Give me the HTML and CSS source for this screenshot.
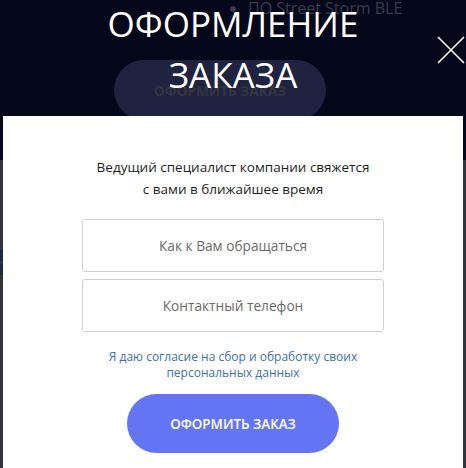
FILE: index.html
```html
<!DOCTYPE html>
<html lang="ru">
<head>
<meta charset="utf-8">
<title>Оформление заказа</title>
<link rel="stylesheet" href="styles.css">
</head>
<body>
<div class="page">
  <div class="hero">
    <ul class="features">
      <li>ПО Street Storm BLE</li>
    </ul>
    <div class="ghost-btn">ОФОРМИТЬ ЗАКАЗ</div>
  </div>
  <div class="section">
    <div class="stripe"></div>
    <div class="stripe"></div>
  </div>
</div>

<div class="overlay">
  <h1 class="title">ОФОРМЛЕНИЕ<br>ЗАКАЗА</h1>
  <button class="close" aria-label="Закрыть">
    <svg width="28" height="28" viewBox="0 0 28 28"><path d="M1 1 L27 27 M27 1 L1 27" stroke="#fff" stroke-width="1.6" fill="none"/></svg>
  </button>
  <div class="modal">
    <p class="lead">Ведущий специалист компании свяжется<br>с вами в ближайшее время</p>
    <form class="form">
      <input class="field" type="text" placeholder="Как к Вам обращаться">
      <input class="field" type="tel" placeholder="Контактный телефон">
      <a class="consent" href="#">Я даю согласие на сбор и обработку своих<br>персональных данных</a>
      <button class="submit" type="button">ОФОРМИТЬ ЗАКАЗ</button>
    </form>
  </div>
</div>
</body>
</html>
```
FILE: styles.css
```css
* { box-sizing: border-box; }
html, body { margin: 0; padding: 0; }
body {
  width: 466px;
  height: 468px;
  overflow: hidden;
  position: relative;
  background: #05081a;
  font-family: "Open Sans", "Noto Sans", sans-serif;
}

.page { display: flex; flex-direction: column; height: 468px; }
.hero { height: 160px; background: #05081a; display: flex; flex-direction: column; align-items: flex-start; }
.features {
  margin: -2px 0 0;
  padding: 0 0 0 248px;
  color: #383b4c;
  font-size: 16px;
  line-height: 20px;
}
.features li { list-style: disc; }
.ghost-btn {
  margin: 42px 0 0 114px;
  width: 212px;
  height: 60px;
  border-radius: 30px;
  background: #1f2340;
  color: #34363f;
  font-weight: 700;
  font-size: 13.7px;
  display: flex;
  align-items: center;
  justify-content: center;
}
.section { flex: 1; background: #32333b; padding-top: 90px; display: flex; flex-direction: column; gap: 3px; }
.stripe { width: 3px; height: 11px; background: #1b2a48; }

.overlay {
  position: absolute;
  inset: 0;
  display: flex;
  flex-direction: column;
  align-items: stretch;
}
.title {
  margin: -2px 0 0;
  text-align: center;
  color: #fff;
  font-weight: 400;
  font-size: 35px;
  line-height: 51px;
}
.close {
  position: absolute;
  left: 437px;
  top: 36px;
  width: 28px;
  height: 28px;
  padding: 0;
  border: 0;
  background: none;
  display: block;
}
.close svg { display: block; }

.modal {
  margin: 16px 3px 0;
  flex: 1;
  background: #fff;
  padding-top: 40px;
  display: flex;
  flex-direction: column;
  align-items: center;
}
.lead {
  margin: 0;
  text-align: center;
  color: #1e1e1e;
  font-size: 13.5px;
  line-height: 22px;
}
.form {
  margin-top: 19px;
  display: flex;
  flex-direction: column;
  align-items: center;
  gap: 7px;
}
.field {
  width: 302px;
  height: 53px;
  border: 1px solid #cfcfcf;
  border-radius: 3px;
  text-align: center;
  font-family: inherit;
  font-size: 13.7px;
  color: #333;
  background: #fff;
  outline: none;
}
.field::placeholder { color: #6a6a6a; }
.consent {
  margin-top: 10px;
  text-align: center;
  color: #3c70b0;
  text-decoration: none;
  font-size: 12px;
  line-height: 16px;
}
.submit {
  margin-top: 6px;
  width: 212px;
  height: 59px;
  border: 0;
  border-radius: 30px;
  background: #6475f3;
  color: #fff;
  font-family: inherit;
  font-size: 13.4px;
  font-weight: 600;
}
```
